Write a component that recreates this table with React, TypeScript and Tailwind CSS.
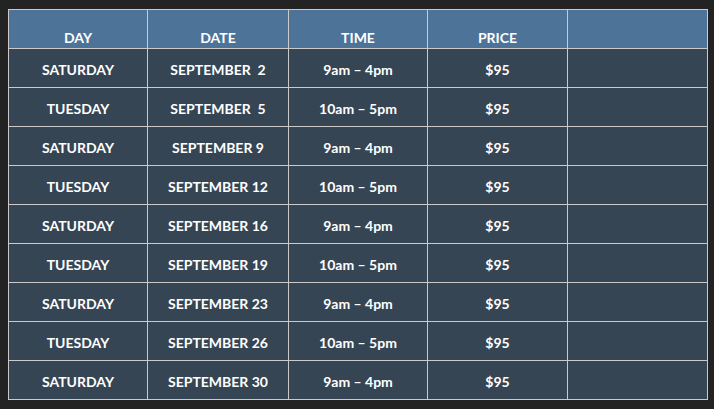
import React from 'react';

const rows = [
  ['SATURDAY', 'SEPTEMBER\u00a0\u00a02', '9am – 4pm', '$95'],
  ['TUESDAY', 'SEPTEMBER\u00a0\u00a05', '10am – 5pm', '$95'],
  ['SATURDAY', 'SEPTEMBER 9', '9am – 4pm', '$95'],
  ['TUESDAY', 'SEPTEMBER 12', '10am – 5pm', '$95'],
  ['SATURDAY', 'SEPTEMBER 16', '9am – 4pm', '$95'],
  ['TUESDAY', 'SEPTEMBER 19', '10am – 5pm', '$95'],
  ['SATURDAY', 'SEPTEMBER 23', '9am – 4pm', '$95'],
  ['TUESDAY', 'SEPTEMBER 26', '10am – 5pm', '$95'],
  ['SATURDAY', 'SEPTEMBER 30', '9am – 4pm', '$95'],
];

const headers = ['DAY', 'DATE', 'TIME', 'PRICE', ''];
const widths = ['w-[139px]', 'w-[141px]', 'w-[139px]', 'w-[140px]', 'w-[140px]'];

export default function App() {
  return (
    <div className="w-[714px] h-[409px] bg-[#232323] pt-[9px] pl-[8px] font-['Lato','Liberation_Sans',sans-serif]">
      <table className="border-collapse text-white font-bold text-[14px] border border-[#cacaca]">
        <thead>
          <tr className="bg-[#4e7399] h-[39px]">
            {headers.map((h, i) => (
              <th
                key={i}
                className={`border border-[#cacaca] ${widths[i]} align-bottom text-center font-bold leading-none`}
              >
                <div className="pb-[3px]">{h}</div>
              </th>
            ))}
          </tr>
        </thead>
        <tbody>
          {rows.map((r, i) => (
            <tr key={i} className="bg-[#364554] h-[39px]">
              {r.map((c, j) => (
                <td key={j} className="border border-[#cacaca] text-center align-middle leading-none whitespace-pre pt-[3px]">
                  {c}
                </td>
              ))}
              <td className="border border-[#cacaca]" />
            </tr>
          ))}
        </tbody>
      </table>
    </div>
  );
}
